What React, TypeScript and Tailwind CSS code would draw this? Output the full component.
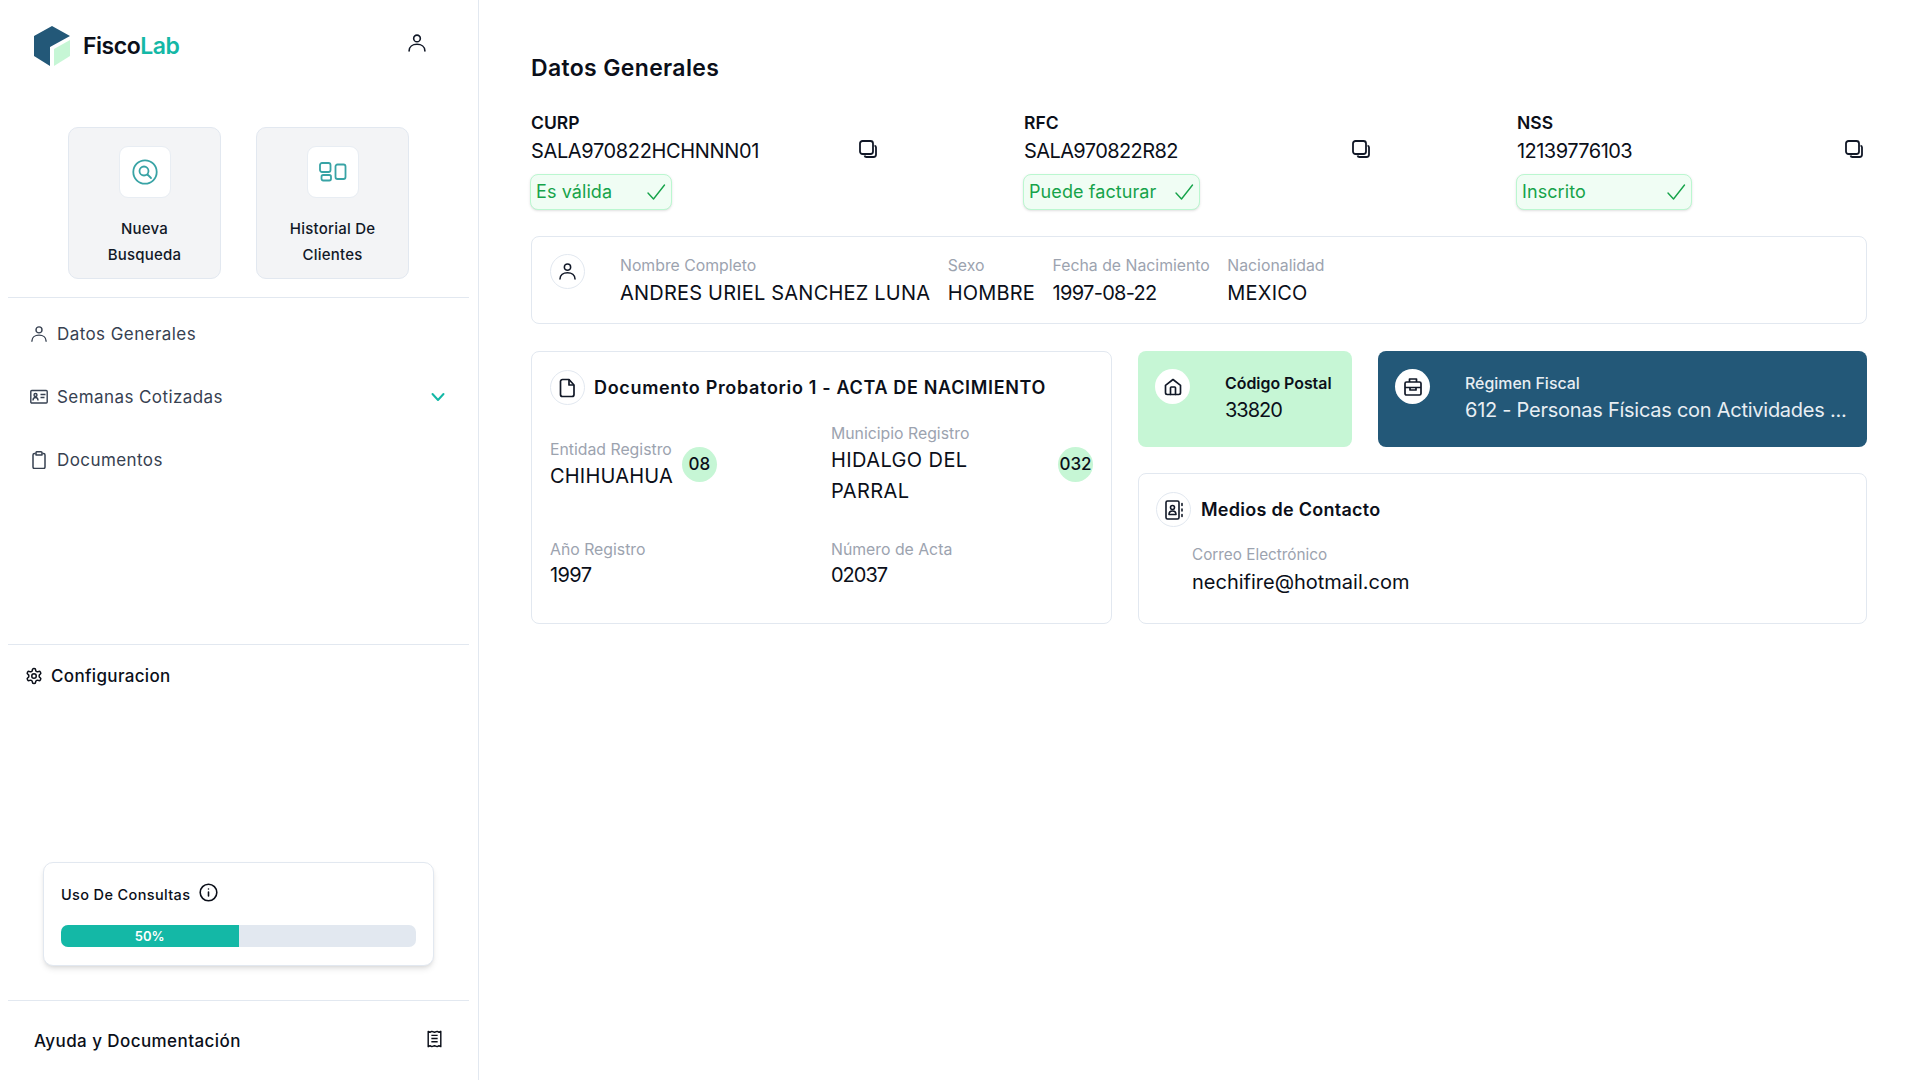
import React from 'react';

const Svg = ({ s = 24, className = '', children }: { s?: number; className?: string; children: React.ReactNode }) => (
  <svg width={s} height={s} viewBox="0 0 24 24" fill="none" stroke="currentColor" strokeWidth={1.9} strokeLinecap="round" strokeLinejoin="round" className={className}>
    {children}
  </svg>
);
const UserIcon = ({ s = 20, className = '' }: { s?: number; className?: string }) => (
  <Svg s={s} className={className}>
    <circle cx="12" cy="6.5" r="4" />
    <path d="M2.5 21.5c0-5 4.2-8 9.500-8s9.500 3 9.500 8" />
  </Svg>
);
const CopyIcon = () => (
  <svg width="18" height="18" viewBox="0 0 18 18" fill="none" stroke="#111827" strokeWidth="1.8" className="shrink-0">
    <rect x="1" y="1" width="13" height="13" rx="2.5" />
    <path d="M15.500 5.500a2 2 0 0 1 1.500 2v7a2.500 2.500 0 0 1-2.500 2.500h-7a2 2 0 0 1-2-1.500" />
  </svg>
);
const CheckIcon = () => (
  <svg width="20" height="20" viewBox="0 0 20 20" fill="none" stroke="#16a34a" strokeWidth="1.4" strokeLinecap="round" strokeLinejoin="round" className="shrink-0">
    <path d="M2 11l5.500 6L18.500 3" />
  </svg>
);

function IdCol({ label, value, badge, badgeW, track }: { label: string; value: string; badge: string; badgeW: string; track: string }) {
  return (
    <div className="w-[346px]">
      <div className="text-[17.5px] leading-[24px] font-semibold text-[#0b0f19]">{label}</div>
      <div className="mt-[4px] flex items-center justify-between">
        <span className={`text-[20px] leading-[24px] text-[#0b0f19] ${track}`}>{value}</span>
        <span className="-translate-y-[2px]"><CopyIcon /></span>
      </div>
      <div className={`mt-[11px] -ml-[1px] h-[36px] ${badgeW} flex items-center justify-between pl-[5px] pr-[5px] rounded-[8px] border border-[#bbf7d0] bg-[#f0fdf4] shadow-sm`}>
        <span className="text-[18px] leading-[24px] text-[#16a34a] tracking-[0.005em]">{badge}</span>
        <CheckIcon />
      </div>
    </div>
  );
}

function Field({ label, value, className = '', track = 'tracking-[0.01em]', gap = 'mt-[1px]' }: { label: string; value: string; className?: string; track?: string; gap?: string }) {
  return (
    <div className={className}>
      <div className="text-[15.8px] leading-[22px] text-[#9ca3af]">{label}</div>
      <div className={`${gap} text-[20px] leading-[31px] text-[#0b0f19] ${track}`}>{value}</div>
    </div>
  );
}

const Circle = ({ children, bordered = true }: { children: React.ReactNode; bordered?: boolean }) => (
  <div className={`w-[35px] h-[35px] shrink-0 rounded-full bg-white flex items-center justify-center ${bordered ? 'border border-[#e2e8f0]' : ''}`}>
    {children}
  </div>
);

export default function App() {
  return (
    <div className="w-[1918px] h-[1080px] flex bg-white overflow-hidden font-[family-name:Inter,sans-serif]">
      <aside className="w-[479px] h-[1080px] shrink-0 border-r border-[#e2e8f0] flex flex-col">
        <div className="h-[40px] mt-[26px] pl-[34px] pr-[51px] flex items-center justify-between">
          <div className="flex items-center gap-[13px]">
            <svg width="36" height="40" viewBox="0 0 36 40">
              <path d="M18 0L36 10 16 21V40L0 30V10Z" fill="#235878" />
              <path d="M20 23L36 14V30L20 40Z" fill="#c6f6d5" />
            </svg>
            <span className="text-[23px] font-semibold text-[#0b0f19] tracking-[-0.02em]">
              Fisco<span className="text-[#14b8a6]">Lab</span>
            </span>
          </div>
          <UserIcon className="text-[#111827] -translate-y-[3px]" />
        </div>

        <div className="mt-[61px] pl-[68px] flex gap-[35px]">
          {[
            ['Nueva', 'Busqueda', 's'],
            ['Historial De', 'Clientes', 'h'],
          ].map(([a, b, k]) => (
            <div key={k} className="w-[153px] h-[152px] rounded-[10px] border border-[#e2e8f0] bg-[#f3f4f6] flex flex-col items-center pt-[18px]">
              <div className="w-[52px] h-[52px] rounded-[9px] bg-white border border-[#e8edf3] flex items-center justify-center text-[#38a3a5]">
                {k === 's' ? (
                  <svg width="26" height="26" viewBox="0 0 26 26" fill="none" stroke="currentColor" strokeWidth="1.8" strokeLinecap="round">
                    <circle cx="13" cy="13" r="11.700" />
                    <circle cx="12" cy="12" r="4.500" />
                    <path d="M15.500 15.500L19 19" />
                  </svg>
                ) : (
                  <svg width="28" height="20" viewBox="0 0 28 20" fill="none" stroke="currentColor" strokeWidth="1.8">
                    <rect x="1" y="1" width="10.500" height="9" rx="2" />
                    <rect x="2.500" y="13" width="9.500" height="5.500" rx="1.700" />
                    <rect x="16.500" y="2.500" width="10" height="14.500" rx="2" />
                  </svg>
                )}
              </div>
              <div className="mt-[18px] text-center text-[15px] leading-[26px] font-medium text-[#111827] tracking-[0.015em]">
                {a}
                <br />
                {b}
              </div>
            </div>
          ))}
        </div>

        <div className="mt-[18px] mx-[8px] w-[461px] h-[1px] bg-[#e2e8f0]" />

        <nav className="pt-[5px] text-[#374151]">
          <div className="h-[63px] pl-[30px] pr-[33px] flex items-center gap-[9px]">
            <UserIcon s={18} className="text-[#374151]" />
            <span className="text-[17px] tracking-[0.025em]">Datos Generales</span>
          </div>
          <div className="h-[63px] pl-[30px] pr-[33px] flex items-center gap-[9px]">
            <svg width="18" height="18" viewBox="0 0 18 18" fill="none" stroke="currentColor" strokeWidth="1.4">
              <rect x="0.800" y="2.500" width="16.400" height="12.500" rx="1" />
              <circle cx="5.500" cy="7" r="1.500" />
              <path d="M3 12.500c0-2 1-3 2.500-3s2.500 1 2.500 3M10.500 6.500h5M10.500 9.500h4" />
            </svg>
            <span className="text-[17px] tracking-[0.025em]">Semanas Cotizadas</span>
            <svg className="ml-auto" width="14" height="10" viewBox="0 0 14 10" fill="none" stroke="#14b8a6" strokeWidth="2" strokeLinecap="round" strokeLinejoin="round">
              <path d="M1.500 2l5.500 6 5.500-6" />
            </svg>
          </div>
          <div className="h-[63px] pl-[30px] pr-[33px] flex items-center gap-[9px]">
            <svg width="18" height="18" viewBox="0 0 18 18" fill="none" stroke="currentColor" strokeWidth="1.5" strokeLinejoin="round">
              <path d="M5.500 2.500H4.500A1.500 1.500 0 0 0 3 4v12a1.500 1.500 0 0 0 1.500 1.500h9A1.500 1.500 0 0 0 15 16V4a1.500 1.500 0 0 0-1.500-1.500H12.500" />
              <path d="M6 4V1.500A1 1 0 0 1 7 .8h4a1 1 0 0 1 1 1V4Z" />
            </svg>
            <span className="text-[17px] tracking-[0.025em]">Documentos</span>
          </div>
        </nav>

        <div className="mt-[152px] mx-[8px] w-[461px] h-[1px] bg-[#e2e8f0]" />

        <div className="h-[64px] pl-[25px] flex items-center gap-[8px] text-[#0b0f19]">
          <svg className="-translate-y-[1px]" width="18" height="18" viewBox="0 0 24 24" fill="none" stroke="currentColor" strokeWidth="2" strokeLinecap="round" strokeLinejoin="round">
            <path d="M12.220 2h-.44a2 2 0 0 0-2 2v.18a2 2 0 0 1-1 1.730l-.43.25a2 2 0 0 1-2 0l-.15-.08a2 2 0 0 0-2.730.73l-.22.38a2 2 0 0 0 .73 2.730l.15.1a2 2 0 0 1 1 1.720v.510a2 2 0 0 1-1 1.740l-.15.090a2 2 0 0 0-.73 2.730l.22.38a2 2 0 0 0 2.730.73l.15-.08a2 2 0 0 1 2 0l.43.25a2 2 0 0 1 1 1.730V20a2 2 0 0 0 2 2h.44a2 2 0 0 0 2-2v-.18a2 2 0 0 1 1-1.730l.43-.25a2 2 0 0 1 2 0l.15.08a2 2 0 0 0 2.730-.73l.22-.39a2 2 0 0 0-.73-2.730l-.15-.08a2 2 0 0 1-1-1.740v-.5a2 2 0 0 1 1-1.740l.15-.09a2 2 0 0 0 .73-2.730l-.22-.38a2 2 0 0 0-2.730-.73l-.15.08a2 2 0 0 1-2 0l-.43-.25a2 2 0 0 1-1-1.730V4a2 2 0 0 0-2-2z" />
            <circle cx="12" cy="12" r="3" />
          </svg>
          <span className="text-[17px] font-medium tracking-[0.02em]">Configuracion</span>
        </div>

        <div className="mt-[154px] ml-[43px] w-[391px] h-[104px] rounded-[10px] border border-[#e2e8f0] bg-white shadow-md pl-[17px] pr-[17px] pt-[20px]">
          <div className="h-[22px] flex items-center text-[#0b0f19]">
            <span className="text-[14.500px] font-medium tracking-[0.025em]">Uso De Consultas</span>
            <svg className="ml-[9px] -translate-y-[2px]" width="19" height="19" viewBox="0 0 24 24" fill="none" stroke="currentColor" strokeWidth="2" strokeLinecap="round">
              <circle cx="12" cy="12" r="10.500" />
              <path d="M12 16.500v-5M12 7.500v.1" />
            </svg>
          </div>
          <div className="mt-[20px] h-[22px] rounded-[7px] bg-[#e2e8f0] overflow-hidden">
            <div className="w-1/2 h-full bg-[#14b8a6] flex items-center justify-center text-white text-[13px] font-semibold">50%</div>
          </div>
        </div>

        <div className="mt-[34px] mx-[8px] w-[461px] h-[1px] bg-[#e2e8f0]" />

        <div className="h-[80px] pl-[34px] pr-[36px] flex items-center justify-between text-[#0b0f19]">
          <span className="text-[17px] font-medium tracking-[0.025em] translate-y-[1px]">Ayuda y Documentación</span>
          <svg className="-translate-y-[1px]" width="15" height="18" viewBox="0 0 16 20" fill="none" stroke="currentColor" strokeWidth="1.600" strokeLinejoin="round">
            <path d="M1 1.500l2 1 2-1 3 1 3-1 2 1 2-1v17l-2-1-2 1-3-1-3 1-2-1-2 1Z" />
            <path d="M4.500 6h7M4.500 9.500h7M4.500 13h7" />
          </svg>
        </div>
      </aside>

      <main className="flex-1 pl-[52px] pt-[53px]">
        <div className="w-[1336px]">
          <h1 className="text-[23px] leading-[30px] font-semibold text-[#0b0f19] tracking-[0.015em]">Datos Generales</h1>

          <div className="mt-[28px] w-[1332px] flex justify-between">
            <IdCol label="CURP" value="SALA970822HCHNNN01" badge="Es válida" badgeW="w-[142px]" track="tracking-[-0.018em]" />
            <IdCol label="RFC" value="SALA970822R82" badge="Puede facturar" badgeW="w-[177px]" track="tracking-[-0.03em]" />
            <IdCol label="NSS" value="12139776103" badge="Inscrito" badgeW="w-[176px]" track="tracking-[-0.027em]" />
          </div>

          <div className="mt-[26px] h-[88px] rounded-[8px] border border-[#e2e8f0] flex pl-[18px] pt-[17px]">
            <Circle><UserIcon s={19} className="text-[#111827]" /></Circle>
            <div className="ml-[35px] mt-[1px] flex gap-[17.5px]">
              <Field label="Nombre Completo" value="ANDRES URIEL SANCHEZ LUNA" />
              <Field label="Sexo" value="HOMBRE" />
              <Field label="Fecha de Nacimiento" value="1997-08-22" track="tracking-[-0.035em]" />
              <Field label="Nacionalidad" value="MEXICO" />
            </div>
          </div>

          <div className="mt-[27px] flex gap-[26px]">
            <div className="w-[581px] h-[273px] rounded-[8px] border border-[#e2e8f0] pl-[18px] pr-[18px] pt-[18px]">
              <div className="flex items-center gap-[9px]">
                <Circle>
                  <svg width="18" height="20" viewBox="0 0 18 20" fill="none" stroke="#111827" strokeWidth="1.700" strokeLinejoin="round">
                    <path d="M3.500 1.500h6.500l5 5.500v9.500a2 2 0 0 1-2 2h-9.500a2 2 0 0 1-2-2V3.500a2 2 0 0 1 2-2Z" />
                    <path d="M10 1.500V7h5" />
                  </svg>
                </Circle>
                <span className="text-[18px] font-semibold text-[#0b0f19] tracking-[0.037em]">Documento Probatorio 1 - ACTA DE NACIMIENTO</span>
              </div>
              <div className="mt-[18px] flex">
                <div className="w-[281px] pt-[16px] flex items-start">
                  <div>
                    <div className="text-[15.8px] leading-[22px] text-[#9ca3af]">Entidad Registro</div>
                    <div className="text-[20px] leading-[31px] text-[#0b0f19] tracking-[0.01em]">CHIHUAHUA</div>
                  </div>
                  <div className="ml-[9px] mt-[8px] w-[35px] h-[35px] rounded-full bg-[#c6f6d5] flex items-center justify-center text-[17px] font-medium text-[#0b0f19]">08</div>
                </div>
                <div className="flex-1 flex items-start justify-between">
                  <div>
                    <div className="text-[15.8px] leading-[22px] text-[#9ca3af]">Municipio Registro</div>
                    <div className="text-[20px] leading-[31px] text-[#0b0f19] tracking-[0.02em]">
                      HIDALGO DEL
                      <br />
                      PARRAL
                    </div>
                  </div>
                  <div className="mt-[24px] w-[35px] h-[35px] rounded-full bg-[#c6f6d5] flex items-center justify-center text-[17px] font-medium text-[#0b0f19]">032</div>
                </div>
              </div>
              <div className="mt-[32px] flex">
                <Field label="Año Registro" value="1997" className="w-[281px]" track="tracking-[-0.03em]" gap="-mt-[1px]" />
                <Field label="Número de Acta" value="02037" track="tracking-[-0.05em]" gap="-mt-[1px]" />
              </div>
            </div>

            <div className="w-[729px] flex flex-col gap-[26px]">
              <div className="h-[96px] flex gap-[26px]">
                <div className="w-[214px] rounded-[8px] bg-[#c6f6d5] flex pl-[17px] pt-[18px] text-[#0b0f19]">
                  <Circle bordered={false}>
                    <svg width="20" height="20" viewBox="0 0 24 24" fill="none" stroke="#111827" strokeWidth="2" strokeLinecap="round" strokeLinejoin="round">
                      <path d="M15 21v-8a1 1 0 0 0-1-1h-4a1 1 0 0 0-1 1v8" />
                      <path d="M3 10l9-7 9 7v9a2 2 0 0 1-2 2H5a2 2 0 0 1-2-2z" />
                    </svg>
                  </Circle>
                  <div className="ml-[35px] mt-[4px]">
                    <div className="text-[15.9px] leading-[22px] font-semibold">Código Postal</div>
                    <div className="mt-[2px] text-[20px] leading-[26px] tracking-[-0.05em]">33820</div>
                  </div>
                </div>
                <div className="flex-1 rounded-[8px] bg-[#235878] flex pl-[17px] pt-[18px] text-white">
                  <Circle bordered={false}>
                    <svg width="20" height="20" viewBox="0 0 20 20" fill="none" stroke="#111827" strokeWidth="1.700" strokeLinejoin="round">
                      <rect x="2" y="5" width="16" height="13" rx="1.500" />
                      <path d="M6.500 5V2h7v3M2 10.500h16M7 10.500v2.500h6v-2.500" />
                    </svg>
                  </Circle>
                  <div className="ml-[35px] mt-[4px]">
                    <div className="text-[15.9px] leading-[22px] font-medium text-[#e8eef3]">Régimen Fiscal</div>
                    <div className="mt-[2px] text-[20px] leading-[26px] whitespace-nowrap text-[#e8eef3] tracking-[-0.013em]">612 - Personas Físicas con Actividades ...</div>
                  </div>
                </div>
              </div>
              <div className="h-[151px] rounded-[8px] border border-[#e2e8f0] pl-[17px] pt-[18px]">
                <div className="flex items-center gap-[10px]">
                  <Circle>
                    <svg width="18" height="20" viewBox="0 0 18 20" fill="none" stroke="#111827" strokeWidth="1.600" strokeLinejoin="round" strokeLinecap="round">
                      <rect x="1" y="1" width="13" height="18" rx="1.500" />
                      <circle cx="7.500" cy="7.500" r="2" />
                      <path d="M4 14.500c0-2.500 1.500-3.500 3.500-3.500s3.500 1 3.500 3.500ZM17 3.500v2M17 9v2M17 14.500v2" />
                    </svg>
                  </Circle>
                  <span className="text-[18px] font-semibold text-[#0b0f19] tracking-[0.015em]">Medios de Contacto</span>
                </div>
                <div className="mt-[17px] ml-[36px]">
                  <div className="text-[15.3px] leading-[22px] text-[#9ca3af]">Correo Electrónico</div>
                  <div className="mt-[1px] text-[20px] leading-[31px] text-[#0b0f19]">nechifire@hotmail.com</div>
                </div>
              </div>
            </div>
          </div>
        </div>
      </main>
    </div>
  );
}
